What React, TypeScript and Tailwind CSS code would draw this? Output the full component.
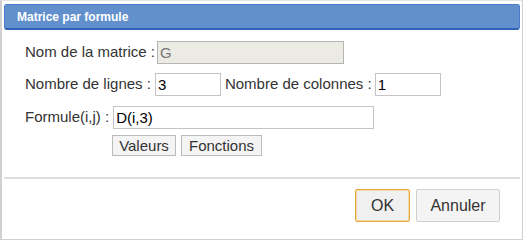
export default function App() {
  return (
    <div
      className="w-[524px] h-[241px] bg-white overflow-hidden"
      style={{ fontFamily: '"Liberation Sans", Arial, sans-serif' }}
    >
      <div className="h-[240px] w-[523px] border-l-2 border-t border-b border-r border-[#d0d0d0] border-t-[#e4e4e4] flex flex-col">
        {/* Title bar */}
        <div className="mt-[3px] ml-[2px] mr-[2px] h-[26px] rounded-[3px] bg-[#6190cd] border border-[#4b7ccb] border-b-2 border-b-[#2f63b8] flex items-center px-[12px]">
          <span className="text-white font-bold text-[12px]">Matrice par formule</span>
        </div>

        {/* Form */}
        <div className="pl-[23px] pt-[11px] text-[15px] text-[#333] flex flex-col">
          <div className="flex items-center h-[23px]">
            <span className="mr-[2px]">Nom de la matrice :</span>
            <input
              disabled
              value="G"
              readOnly
              className="w-[187px] h-[23px] bg-[#ebebe4] border border-[#b5b5b5] px-[2px] text-[#777] text-[15px] outline-none"
            />
          </div>
          <div className="flex items-center h-[23px] mt-[9px]">
            <span className="mr-[4px]">Nombre de lignes :</span>
            <input
              value="3"
              readOnly
              className="w-[66px] h-[23px] bg-white border border-[#c4c4c4] px-[2px] text-black text-[15px] outline-none"
            />
            <span className="ml-[4px] mr-[3px]">Nombre de colonnes :</span>
            <input
              value="1"
              readOnly
              className="w-[66px] h-[23px] bg-white border border-[#c4c4c4] px-[2px] text-black text-[15px] outline-none"
            />
          </div>
          <div className="flex items-center h-[23px] mt-[10px]">
            <span className="mr-[4px]">Formule(i,j) :</span>
            <input
              value="D(i,3)"
              readOnly
              className="w-[261px] h-[23px] bg-white border border-[#c4c4c4] px-[2px] text-black text-[15px] outline-none"
            />
          </div>
          <div className="flex gap-[5px] mt-[6px] ml-[87px]">
            <button className="h-[21px] w-[64px] bg-[#f4f4f4] border border-[#bbb] text-[15px] text-[#333] leading-none">
              Valeurs
            </button>
            <button className="h-[21px] w-[81px] bg-[#f4f4f4] border border-[#bbb] text-[15px] text-[#333] leading-none">
              Fonctions
            </button>
          </div>
        </div>

        <div className="mt-[21px] mx-[2px] border-t-2 border-[#dedede]" />

        <div className="flex justify-end gap-[6px] pr-[22px] pt-[10px]">
          <button className="w-[55px] h-[33px] bg-[#f0f0f0] border border-[#e5a93b] shadow-[inset_0_0_0_1px_#f3d9a6] rounded-[2px] text-[16px] text-[#333]">
            OK
          </button>
          <button className="w-[84px] h-[33px] bg-[#f4f4f4] border border-[#d0d0d0] rounded-[2px] text-[16px] text-[#333]">
            Annuler
          </button>
        </div>
      </div>
    </div>
  );
}
